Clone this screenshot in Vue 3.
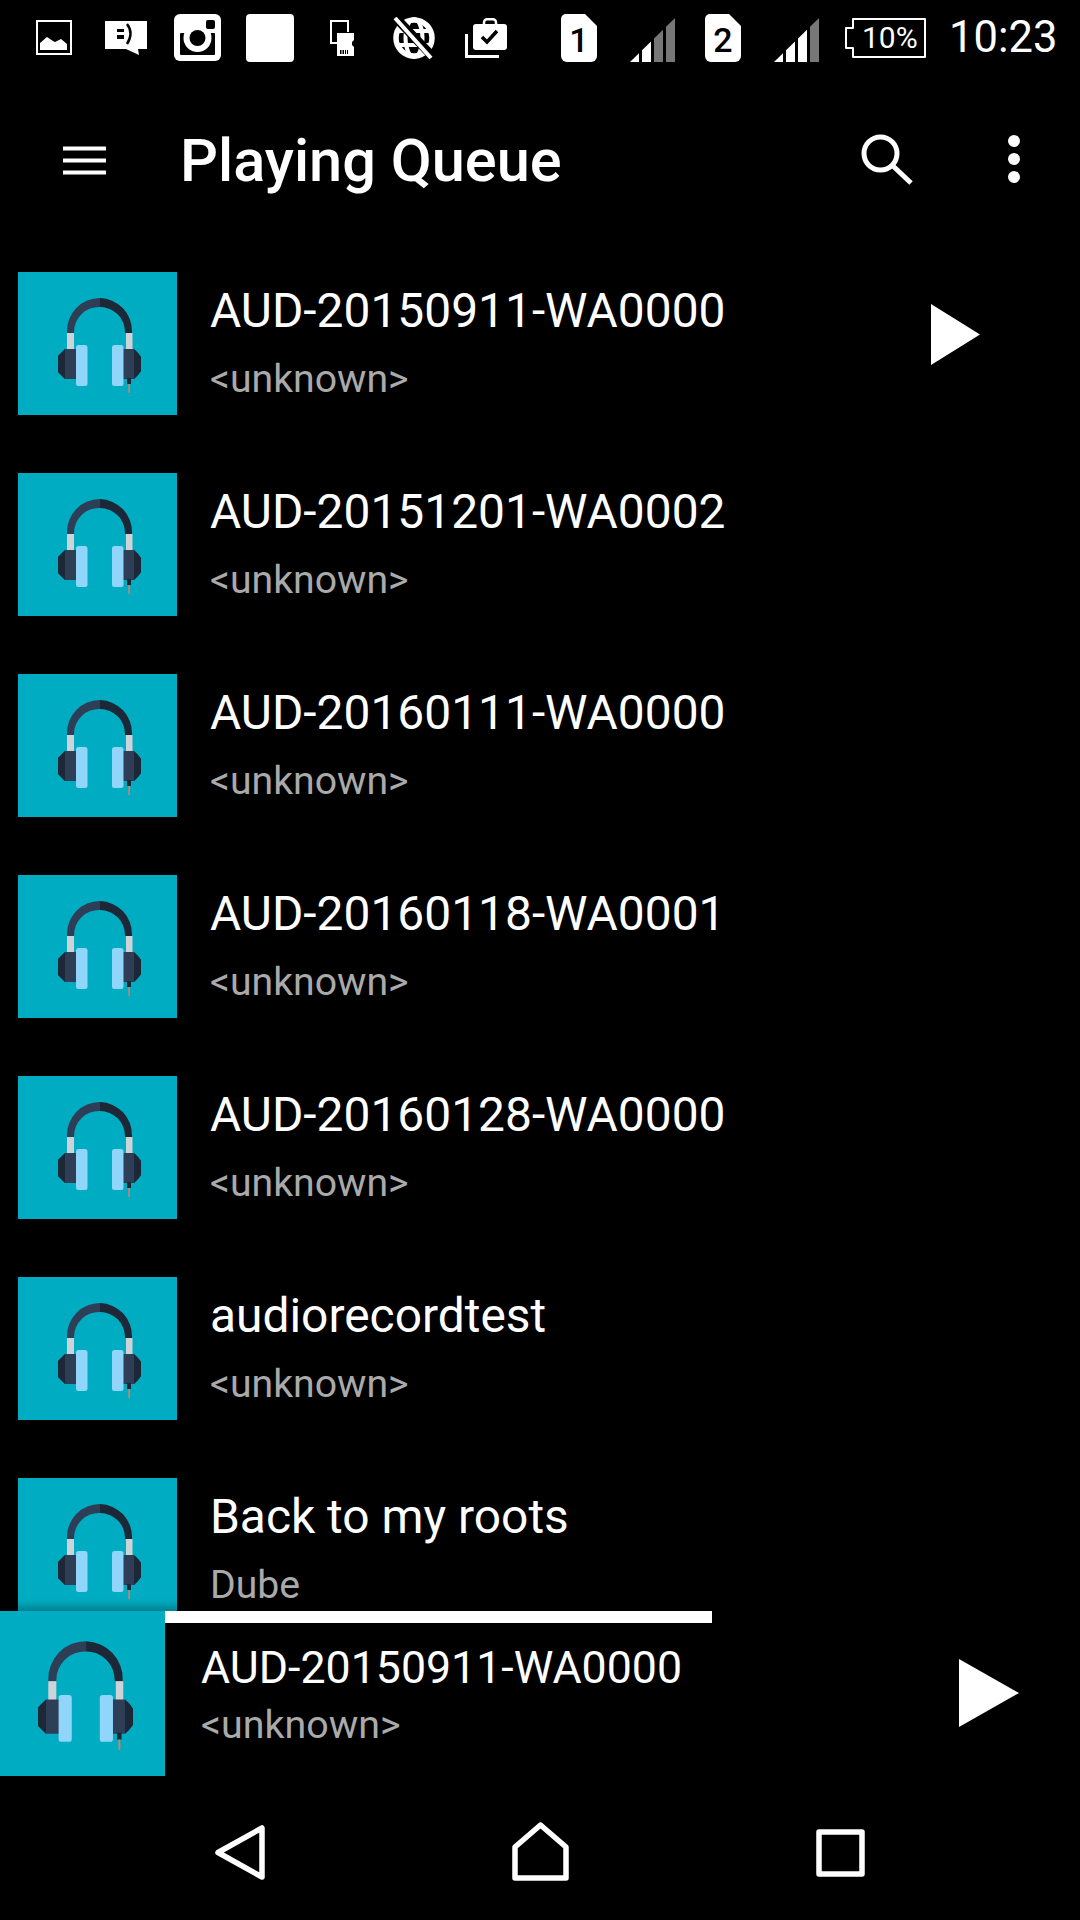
<script setup>
const rows = [
  { title: 'AUD-20150911-WA0000', sub: '<unknown>', play: true },
  { title: 'AUD-20151201-WA0002', sub: '<unknown>' },
  { title: 'AUD-20160111-WA0000', sub: '<unknown>' },
  { title: 'AUD-20160118-WA0001', sub: '<unknown>' },
  { title: 'AUD-20160128-WA0000', sub: '<unknown>' },
  { title: 'audiorecordtest', sub: '<unknown>' },
  { title: 'Back to my roots', sub: 'Dube' }
]
</script>

<template>
  <div class="page">
    <svg class="defs" width="0" height="0">
      <symbol id="phones" viewBox="40 26 83 95">
        <path d="M49 61V60a33 33 0 0 1 33-34V35a25 25 0 0 0-26 25V61Z" fill="#2f3e57" />
        <path d="M114 61V60a33 33 0 0 0-32-34V35a25 25 0 0 1 25 25V61Z" fill="#1c2838" />
        <rect x="49" y="61" width="7" height="17" fill="#cfd3d8" />
        <rect x="108" y="61" width="6.500" height="17" fill="#cfd3d8" />
        <path d="M47 77H60V107H47L43 103L40 100V84L43 81Z" fill="#2f3e57" />
        <path d="M47 77V107L43 103L40 100V84L43 81Z" fill="#1c2838" />
        <path d="M104 77H116L120 81L123 85V99L120 103L116 107H104Z" fill="#2f3e57" />
        <path d="M116 77L120 81L123 85V99L120 103L116 107Z" fill="#1c2838" />
        <rect x="58" y="73" width="11.500" height="41" rx="2.500" fill="#90d6fb" />
        <rect x="94" y="73" width="11.500" height="41" rx="2.500" fill="#90d6fb" />
        <rect x="109" y="106" width="4" height="6" fill="#1c2838" />
        <rect x="110.300" y="112" width="1.600" height="9" fill="#d9805f" />
      </symbol>
    </svg>

    <div class="status">
      <svg class="s-pic" width="36" height="35" viewBox="0 0 36 35">
        <rect x="1" y="1" width="34" height="33" fill="none" stroke="#fff" stroke-width="2" />
        <path d="M4 30V23L11 17L17 21L19 22L25 19L31 24V30Z" fill="#fff" />
      </svg>
      <svg class="s-msg" width="42" height="36" viewBox="0 0 42 36">
        <path d="M0 1H42V29H33L34 35L21 29H0Z" fill="#fff" />
        <rect x="12" y="9" width="7" height="3" fill="#000" />
        <rect x="12" y="15" width="7" height="4" fill="#000" />
        <path d="M22 4Q29 13 22 24" fill="none" stroke="#000" stroke-width="2.500" />
      </svg>
      <svg class="s-ig" width="47" height="47" viewBox="0 0 47 47">
        <rect width="47" height="47" rx="6" fill="#fff" />
        <rect x="6" y="19" width="35" height="22" rx="1" fill="#000" />
        <circle cx="23.500" cy="24" r="14" fill="#fff" />
        <circle cx="23.500" cy="24" r="8" fill="#000" />
        <rect x="32" y="6" width="9" height="9" rx="2" fill="#000" />
      </svg>
      <div class="s-blank"></div>
      <svg class="s-sd" width="24" height="36" viewBox="0 0 24 36">
        <path d="M18 12V1H1V23H7" fill="none" stroke="#fff" stroke-width="2" />
        <path d="M7 13H24V20L22 22V25L24 27V36H7Z" fill="#fff" />
        <path d="M10 30H18V34H10Z" fill="#000" />
        <path d="M12 30V34M14.500 30V34M16.500 30V34" stroke="#fff" stroke-width="1" />
      </svg>
      <svg class="s-globe" width="42" height="42" viewBox="0 0 42 42">
        <circle cx="21" cy="21" r="18" fill="#000" stroke="#fff" stroke-width="5.500" />
        <ellipse cx="21" cy="21" rx="8.500" ry="19" fill="none" stroke="#fff" stroke-width="4" />
        <path d="M3 14H39M3 28H39" stroke="#fff" stroke-width="4" />
        <path d="M3 1L41 41" stroke="#000" stroke-width="9" />
        <path d="M2 1L38 41" stroke="#fff" stroke-width="4" />
      </svg>
      <svg class="s-case" width="42" height="40" viewBox="0 0 42 40">
        <path d="M1.500 16V38.500H34" fill="none" stroke="#fff" stroke-width="3" />
        <rect x="8" y="6" width="34" height="26" rx="3" fill="#fff" />
        <rect x="19" y="1.200" width="12" height="8" rx="3" fill="none" stroke="#fff" stroke-width="2.500" />
        <path d="M17 19L22 24L32 13" fill="none" stroke="#000" stroke-width="3.500" />
      </svg>
      <svg class="s-sim1" width="36" height="48" viewBox="0 0 36 48">
        <path d="M5 0H24L36 12V42a6 6 0 0 1-6 6H6a6 6 0 0 1-6-6V5a5 5 0 0 1 5-5Z" fill="#fff" />
        <text x="18" y="38" text-anchor="middle" class="sim-digit">1</text>
      </svg>
      <svg class="s-sig" width="45" height="44" viewBox="0 0 45 44">
        <polygon points="0,44 9,35.200 9,44" fill="#fff" />
        <polygon points="12,32.300 21,23.500 21,44 12,44" fill="#fff" />
        <polygon points="24,20.500 33,11.700 33,44 24,44" fill="#777" />
        <polygon points="36,8.800 45,0 45,44 36,44" fill="#777" />
      </svg>
      <svg class="s-sim2" width="36" height="48" viewBox="0 0 36 48">
        <path d="M5 0H24L36 12V42a6 6 0 0 1-6 6H6a6 6 0 0 1-6-6V5a5 5 0 0 1 5-5Z" fill="#fff" />
        <text x="18" y="38" text-anchor="middle" class="sim-digit">2</text>
      </svg>
      <svg class="s-sig" width="45" height="44" viewBox="0 0 45 44">
        <polygon points="0,44 9,35.200 9,44" fill="#fff" />
        <polygon points="12,32.300 21,23.500 21,44 12,44" fill="#fff" />
        <polygon points="24,20.500 33,11.700 33,44 24,44" fill="#fff" />
        <polygon points="36,8.800 45,0 45,44 36,44" fill="#777" />
      </svg>
      <div class="s-batt">
        <svg width="81" height="40" viewBox="0 0 81 40">
          <path d="M8 1H80V39H8V30H1V10H8Z" fill="none" stroke="#fff" stroke-width="2" stroke-linejoin="round" />
        </svg>
        <span class="batt-text">10%</span>
      </div>
      <span class="s-time">10:23</span>
    </div>

    <div class="toolbar">
      <svg class="menu" width="43" height="29" viewBox="0 0 43 29">
        <path d="M0 2.500H43M0 14.500H43M0 26.500H43" stroke="#fff" stroke-width="4" />
      </svg>
      <span class="tb-title">Playing Queue</span>
      <svg class="search" width="53" height="52" viewBox="0 0 53 52">
        <circle cx="20.500" cy="19.500" r="16.500" fill="none" stroke="#fff" stroke-width="5" />
        <path d="M33 32L51 49" stroke="#fff" stroke-width="5" />
      </svg>
      <svg class="dots" width="12" height="48" viewBox="0 0 12 48">
        <circle cx="6" cy="6" r="6" fill="#fff" />
        <circle cx="6" cy="24" r="6" fill="#fff" />
        <circle cx="6" cy="42" r="6" fill="#fff" />
      </svg>
    </div>

    <div class="list">
      <div v-for="row in rows" :key="row.title" class="row">
        <div class="thumb">
          <svg class="phones" width="83" height="95"><use href="#phones" /></svg>
        </div>
        <div class="row-text">
          <div class="row-title">{{ row.title }}</div>
          <div class="row-sub">{{ row.sub }}</div>
        </div>
        <svg v-if="row.play" class="row-play" width="49" height="61" viewBox="0 0 49 61">
          <polygon points="0,0 49,30.500 0,61" fill="#fff" />
        </svg>
      </div>
    </div>

    <div class="player">
      <div class="p-thumb">
        <svg class="p-phones" width="95" height="109"><use href="#phones" /></svg>
      </div>
      <div class="p-main">
        <div class="progress"></div>
        <div class="p-row">
          <div class="p-text">
            <div class="p-title">AUD-20150911-WA0000</div>
            <div class="p-sub">&lt;unknown&gt;</div>
          </div>
          <svg class="p-play" width="60" height="68" viewBox="0 0 60 68">
            <polygon points="0,0 60,34 0,68" fill="#fff" />
          </svg>
        </div>
      </div>
    </div>

    <div class="nav">
      <div class="nav-cell nav-back">
        <svg width="50" height="55" viewBox="0 0 50 55">
          <path d="M47 3V52L3 27.500Z" fill="none" stroke="#fff" stroke-width="5.500" stroke-linejoin="round" />
        </svg>
      </div>
      <div class="nav-cell">
        <svg width="57" height="59" viewBox="0 0 57 59">
          <path d="M3 56V25L28.500 3L54 25V56Z" fill="none" stroke="#fff" stroke-width="5.500" stroke-linejoin="round" />
        </svg>
      </div>
      <div class="nav-cell nav-square">
        <svg width="49" height="48" viewBox="0 0 49 48">
          <rect x="3" y="3" width="43" height="42" fill="none" stroke="#fff" stroke-width="5.500" stroke-linejoin="round" />
        </svg>
      </div>
    </div>
  </div>
</template>

<style scoped>
.page {
  width: 1080px;
  height: 1920px;
  background: #000;
  color: #fff;
  font-family: Roboto, "Liberation Sans", sans-serif;
  display: flex;
  flex-direction: column;
  overflow: hidden;
}
.defs { position: absolute; }
svg { display: block; flex: none; }

.status {
  height: 75px;
  flex: none;
  display: flex;
  align-items: center;
  padding-left: 36px;
}
.s-msg { margin-left: 33px; }
.s-ig { margin-left: 27px; }
.s-blank {
  width: 48px;
  height: 48px;
  margin-left: 25px;
  background: #fff;
  border-radius: 4px;
}
.s-sd { margin-left: 36px; }
.s-globe { margin-left: 39px; }
.s-case { margin-left: 30px; }
.s-sim1 { margin-left: 54px; }
.s-sig { margin-left: 33px; margin-top: 4px; }
.s-sim2 { margin-left: 30px; }
.s-batt {
  position: relative;
  width: 81px;
  height: 40px;
  margin-left: 26px;
}
.batt-text {
  position: absolute;
  left: 17px;
  top: 2px;
  font-size: 30px;
  line-height: 36px;
}
.s-time {
  margin-left: 23px;
  font-size: 43.500px;
  line-height: 50px;
}
.sim-digit {
  font-family: Roboto, sans-serif;
  font-size: 34px;
  font-weight: 500;
  fill: #000;
}

.toolbar {
  height: 170px;
  flex: none;
  display: flex;
  align-items: center;
  padding: 0 60px 0 63px;
}
.tb-title {
  margin: 2px 0 0 74px;
  font-size: 59.500px;
  font-weight: 500;
  line-height: 66px;
}
.search { margin-left: auto; }
.dots { margin: -2px 0 0 95px; }

.list {
  flex: 1;
  min-height: 0;
  overflow: hidden;
  display: flex;
  flex-direction: column;
  gap: 58px;
  padding: 27px 0 0 18px;
}
.row {
  display: flex;
  flex: none;
  height: 143px;
  align-items: flex-start;
}
.thumb {
  width: 159px;
  height: 143px;
  background: #00acc1;
  padding: 26px 0 0 40px;
  box-sizing: border-box;
  flex: none;
}
.row-text { margin-left: 33px; }
.row-title {
  font-size: 47.900px;
  line-height: 53px;
  margin-top: 13px;
}
.row-sub {
  font-size: 39.200px;
  line-height: 42px;
  color: #aaa;
  margin-top: 20px;
}
.row-play {
  margin: 32px 100px 0 auto;
}

.player {
  position: relative;
  height: 165px;
  flex: none;
  display: flex;
  background: #000;
  box-shadow: 0 -4px 8px rgba(0, 0, 0, 0.3);
}
.p-thumb {
  width: 165px;
  height: 165px;
  background: #00acc1;
  padding: 30px 0 0 38px;
  box-sizing: border-box;
  flex: none;
}
.p-main { flex: 1; min-width: 0; }
.progress {
  width: 547px;
  height: 12px;
  background: #fff;
}
.p-row {
  display: flex;
  align-items: flex-start;
  padding-left: 36px;
}
.p-title {
  font-size: 44.700px;
  line-height: 50px;
  margin-top: 20px;
}
.p-sub {
  font-size: 39.400px;
  line-height: 42px;
  color: #aaa;
  margin-top: 11px;
}
.p-play { margin: 36px 61px 0 auto; }

.nav {
  height: 144px;
  flex: none;
  display: flex;
  padding: 0 90px;
}
.nav-cell {
  width: 300px;
  display: flex;
  align-items: center;
  justify-content: center;
  padding-top: 6px;
  box-sizing: border-box;
}
.nav-back { padding-top: 9px; }
.nav-square { padding-top: 10px; }
</style>

<style>
html, body { background: #000; }
</style>
